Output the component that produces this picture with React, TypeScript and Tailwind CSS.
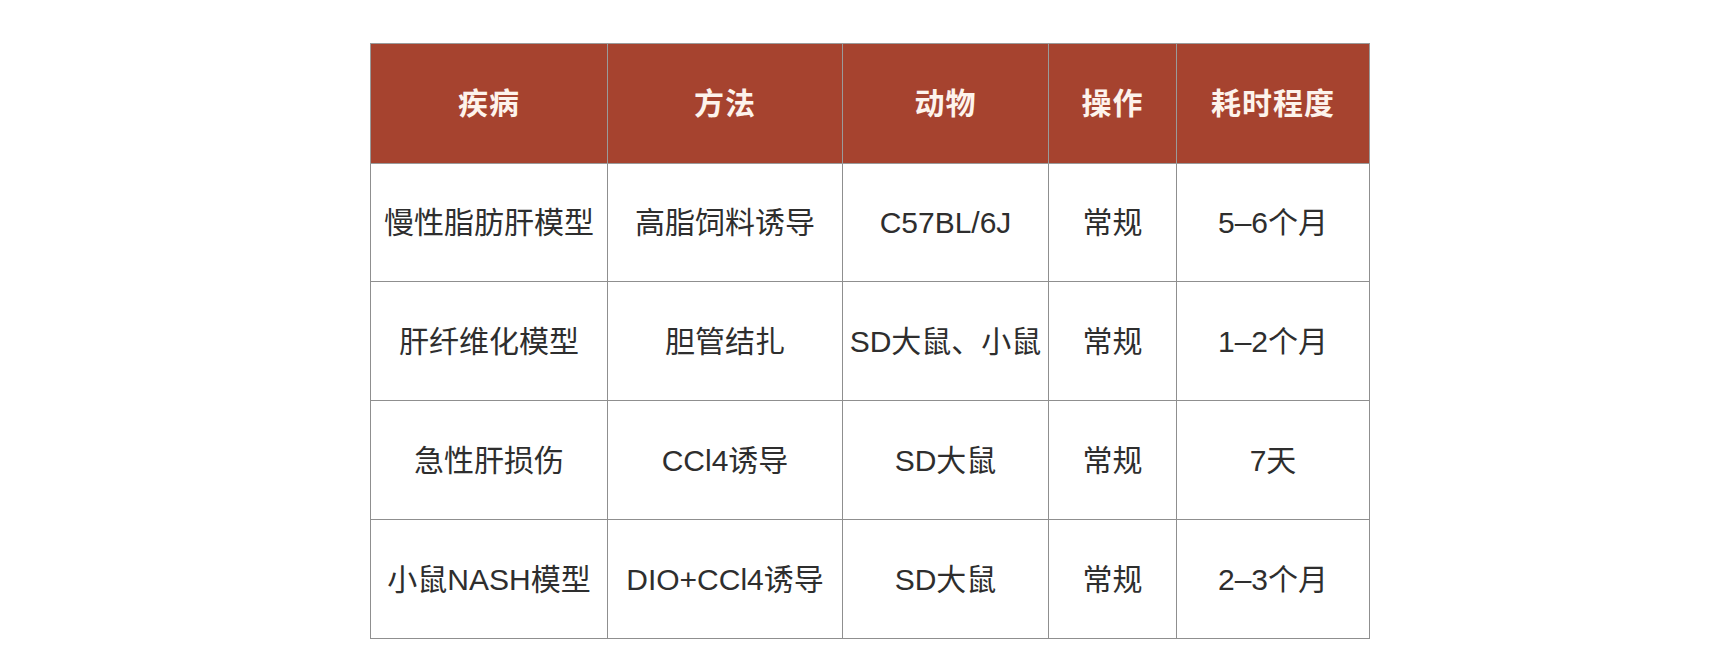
import React from "react";

const headers = ["疾病", "方法", "动物", "操作", "耗时程度"];

const rows: string[][] = [
  ["慢性脂肪肝模型", "高脂饲料诱导", "C57BL/6J", "常规", "5–6个月"],
  ["肝纤维化模型", "胆管结扎", "SD大鼠、小鼠", "常规", "1–2个月"],
  ["急性肝损伤", "CCl4诱导", "SD大鼠", "常规", "7天"],
  ["小鼠NASH模型", "DIO+CCl4诱导", "SD大鼠", "常规", "2–3个月"],
];

const colWidths = ["w-[237px]", "w-[235px]", "w-[206px]", "w-[128px]", "w-[193px]"];

export default function App() {
  return (
    <div className="w-[1730px] h-[652px] bg-white overflow-hidden font-['Liberation_Sans','Noto_Sans_CJK_SC',sans-serif]">
      <table className="ml-[370px] mt-[43px] w-[999px] table-fixed border-collapse">
        <colgroup>
          {colWidths.map((w, i) => (
            <col key={i} className={w} />
          ))}
        </colgroup>
        <thead>
          <tr className="h-[120px] bg-[#a6432f]">
            {headers.map((h) => (
              <th
                key={h}
                className="border border-[#9a9a9a] text-[30px] font-semibold text-[#fdf3ec] text-center tracking-[1px]"
              >
                {h}
              </th>
            ))}
          </tr>
        </thead>
        <tbody>
          {rows.map((r, i) => (
            <tr key={i} className={i === 0 ? "h-[118px]" : "h-[119px]"}>
              {r.map((c, j) => (
                <td
                  key={j}
                  className="border border-[#8f8f8f] text-[30px] text-[#2e2e2e] text-center whitespace-nowrap p-0"
                >
                  {c}
                </td>
              ))}
            </tr>
          ))}
        </tbody>
      </table>
    </div>
  );
}
